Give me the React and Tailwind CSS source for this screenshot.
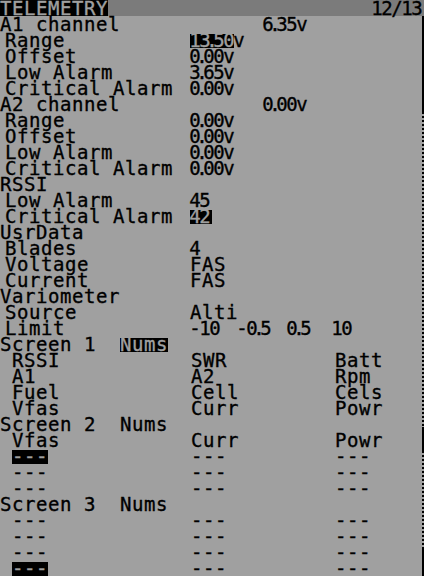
import React from 'react';

// LCD-style telemetry page (212x288 LCD scaled 2x)

function Num({ s }) {
  return (
    <span className="inline-flex tracking-normal">
      {[...s].map((c, i) => (
        <span key={i} className={`inline-flex justify-center ${c === '.' ? 'w-[4px]' : 'w-[10px]'}`}>
          {c}
        </span>
      ))}
    </span>
  );
}

function Inv({ children }) {
  return (
    <span className="inline-block h-[14px] bg-black leading-[13px] text-[#a0a0a0]">{children}</span>
  );
}

function Head({ label, children }) {
  return (
    <div className="flex h-4">
      <span className="w-[190px] shrink-0">{label}</span>
      <span>{children}</span>
    </div>
  );
}

function Item({ label, children }) {
  return (
    <div className="flex h-4">
      <span className="w-[190px] shrink-0 pl-[5px]">{label}</span>
      <span>{children}</span>
    </div>
  );
}

function Cols({ a, b, c }) {
  return (
    <div className="flex h-4">
      <span className="w-[191px] shrink-0 pl-[12px]">{a}</span>
      <span className="w-[144px] shrink-0">{b}</span>
      <span>{c}</span>
    </div>
  );
}

function ScreenHead({ n, inv }) {
  return (
    <div className="flex h-4">
      <span className="w-[120px] shrink-0">Screen {n}</span>
      <span>{inv ? <Inv>Nums</Inv> : 'Nums'}</span>
    </div>
  );
}

const dotted = 'bg-[repeating-linear-gradient(to_bottom,#000_0_2px,transparent_2px_4px)]';

export default function App() {
  const dash = '---';
  return (
    <div className="h-[576px] w-[424px] overflow-hidden whitespace-pre bg-[#a0a0a0] font-['DejaVu_Sans_Mono',monospace] text-[19px] leading-[17px] tracking-[0.56px] text-black [-webkit-text-stroke:0.35px]">
      {/* title bar */}
      <div className="flex h-4 items-start justify-between bg-[#7b7b7b]">
        <span className="h-4 bg-black leading-[17px] text-[#a0a0a0]">TELEMETRY</span>
        <span className="pr-[2px] leading-[17px]">
          <Num s="12/13" />
        </span>
      </div>

      <div className="flex">
        <div className="flex-1">
          <Head label="A1 channel">
            <span className="pl-[73px]"><Num s="6.35v" /></span>
          </Head>
          <Item label="Range">
            <Inv><Num s="13.50" /></Inv>
            <Num s="v" />
          </Item>
          <Item label="Offset"><Num s="0.00v" /></Item>
          <Item label="Low Alarm"><Num s="3.65v" /></Item>
          <Item label="Critical Alarm"><Num s="0.00v" /></Item>

          <Head label="A2 channel">
            <span className="pl-[73px]"><Num s="0.00v" /></span>
          </Head>
          <Item label="Range"><Num s="0.00v" /></Item>
          <Item label="Offset"><Num s="0.00v" /></Item>
          <Item label="Low Alarm"><Num s="0.00v" /></Item>
          <Item label="Critical Alarm"><Num s="0.00v" /></Item>

          <Head label="RSSI" />
          <Item label="Low Alarm"><Num s="45" /></Item>
          <Item label="Critical Alarm">
            <Inv><span className="pr-[2px]"><Num s="42" /></span></Inv>
          </Item>

          <Head label="UsrData" />
          <Item label="Blades"><Num s="4" /></Item>
          <Item label="Voltage">FAS</Item>
          <Item label="Current">FAS</Item>

          <Head label="Variometer" />
          <Item label="Source">Alti</Item>
          <Item label="Limit">
            <span className="inline-block w-[47px]"><Num s="-10" /></span>
            <span className="inline-block w-[50px]"><Num s="-0.5" /></span>
            <span className="inline-block w-[45px]"><Num s="0.5" /></span>
            <Num s="10" />
          </Item>

          <ScreenHead n="1" inv />
          <Cols a="RSSI" b="SWR" c="Batt" />
          <Cols a="A1" b="A2" c="Rpm" />
          <Cols a="Fuel" b="Cell" c="Cels" />
          <Cols a="Vfas" b="Curr" c="Powr" />

          <ScreenHead n="2" />
          <Cols a="Vfas" b="Curr" c="Powr" />
          <Cols a={<Inv>{dash}</Inv>} b={dash} c={dash} />
          <Cols a={dash} b={dash} c={dash} />
          <Cols a={dash} b={dash} c={dash} />

          <ScreenHead n="3" />
          <Cols a={dash} b={dash} c={dash} />
          <Cols a={dash} b={dash} c={dash} />
          <Cols a={dash} b={dash} c={dash} />
          <Cols a={<Inv>{dash}</Inv>} b={dash} c={dash} />
        </div>

        {/* scroll bar */}
        <div className="flex w-[2px] shrink-0 flex-col">
          <div className="h-[96px] bg-black" />
          <div className={`h-[315px] ${dotted}`} />
          <div className="h-[24px] bg-black" />
          <div className={`h-[96px] ${dotted}`} />
          <div className="h-[29px] bg-black" />
        </div>
      </div>
    </div>
  );
}
